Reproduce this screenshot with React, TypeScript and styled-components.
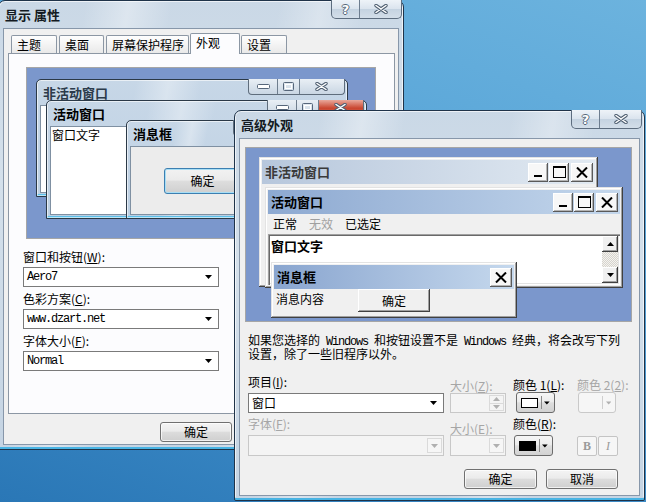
import React from 'react';
import styled, { createGlobalStyle } from 'styled-components';

type Box = { $x: number; $y: number; $w: number; $h: number };
const placed = (p: Box) => `left: ${p.$x}px; top: ${p.$y}px; width: ${p.$w}px; height: ${p.$h}px;`;

const GlobalStyle = createGlobalStyle`
  html, body { margin: 0; padding: 0; }
  body {
    font-family: "Noto Sans CJK SC", "Noto Sans", sans-serif;
    font-size: 12px;
    line-height: 14px;
    color: #000;
  }
  * { box-sizing: border-box; }
`;

const Desktop = styled.div`
  position: relative;
  width: 646px;
  height: 502px;
  overflow: hidden;
  background: linear-gradient(200deg, #6cb3de 0%, #58a5d8 35%, #3b89c5 72%, #2a77b6 100%);
`;

/* ---------- Aero window frame ---------- */

const Frame = styled.div<Box>`
  position: absolute;
  isolation: isolate;
  ${placed}
  display: flex;
  flex-direction: column;
  padding: 0 4px 4px;
  border: 1px solid #1f3349;
  border-radius: 7px 7px 2px 2px;
  background:
    linear-gradient(100deg, rgba(255, 255, 255, 0) 18%, rgba(255, 255, 255, 0.35) 27%, rgba(255, 255, 255, 0) 36%,
      rgba(255, 255, 255, 0) 58%, rgba(255, 255, 255, 0.3) 67%, rgba(255, 255, 255, 0) 76%),
    linear-gradient(180deg, #cad8e6 0%, #d4e0eb 40%, #c5d4e3 100%);
  box-shadow: inset 0 -2px 0 #48b4e4, inset 0 0 0 1px rgba(255, 255, 255, 0.65);
`;

const TitleBar = styled.div`
  flex: none;
  height: 27px;
  display: flex;
  align-items: center;
  padding-left: 2px;
  font-size: 13px;
  font-weight: bold;
  color: #131a22;
`;

const CaptionGroup = styled.div<{ $right: number }>`
  position: absolute;
  top: -1px;
  right: ${(p) => p.$right}px;
  display: flex;
  height: 19px;
  border: 1px solid #5d6d7f;
  border-top: none;
  border-radius: 0 0 5px 5px;
  overflow: hidden;
  background: linear-gradient(#eef3f8 0%, #dbe4ee 48%, #c5d3e1 52%, #d3dee9 100%);
`;

const CaptionButton = styled.div<{ $w: number }>`
  width: ${(p) => p.$w}px;
  display: flex;
  align-items: center;
  justify-content: center;
  & + & {
    border-left: 1px solid #6d7d8f;
  }
`;

const HelpGlyph = styled.span`
  font-family: "DejaVu Sans", sans-serif;
  font-size: 13px;
  font-weight: bold;
  line-height: 13px;
  color: #fff;
  text-shadow: 1px 0 #58687a, -1px 0 #58687a, 0 1px #58687a, 0 -1px #58687a;
`;

const OutlineX = ({ w = 14, h = 10 }: { w?: number; h?: number }) => (
  <svg width={w} height={h} viewBox={`0 0 ${w} ${h}`}>
    <path d={`M2 1.5L${w - 2} ${h - 1.5}M${w - 2} 1.5L2 ${h - 1.5}`} stroke="#4f5f71" strokeWidth="3.4" strokeLinecap="round" />
    <path d={`M2 1.5L${w - 2} ${h - 1.5}M${w - 2} 1.5L2 ${h - 1.5}`} stroke="#fff" strokeWidth="1.5" strokeLinecap="round" />
  </svg>
);

const Client = styled.div<{ $pad?: string }>`
  flex: 1;
  min-height: 0;
  position: relative;
  display: flex;
  flex-direction: column;
  padding: ${(p) => p.$pad ?? '0'};
  background: #f0f0f0;
  border: 1px solid #8797aa;
`;

/* ---------- shared controls ---------- */

const Mono = styled.span`
  font-family: "Liberation Mono", monospace;
  letter-spacing: -1.2px;
`;

const AeroButton = styled.div<{ $w?: number }>`
  flex: none;
  width: ${(p) => p.$w ?? 72}px;
  height: 20px;
  display: flex;
  align-items: center;
  justify-content: center;
  border: 1px solid #707070;
  border-radius: 3px;
  background: linear-gradient(#f4f4f4 0%, #ebebeb 45%, #dcdcdc 52%, #cfcfcf 100%);
  box-shadow: inset 0 0 0 1px rgba(255, 255, 255, 0.7);
`;

const Combo = styled.div<{ $w: number; $h?: number; $off?: boolean }>`
  flex: none;
  width: ${(p) => p.$w}px;
  height: ${(p) => p.$h ?? 20}px;
  display: flex;
  align-items: center;
  justify-content: space-between;
  padding: 0 ${(p) => (p.$off ? 1 : 6)}px 0 3px;
  border: 1px solid ${(p) => (p.$off ? '#c8c8c8' : '#7a7a7a')};
  background: ${(p) => (p.$off ? '#f4f4f4' : '#fff')};
`;

const ArrowBox = styled.div`
  width: 15px;
  height: 15px;
  display: flex;
  align-items: center;
  justify-content: center;
  border: 1px solid #dadada;
  background: #f6f6f6;
`;

const SpinBox = styled.div`
  width: 15px;
  height: 16px;
  display: flex;
  flex-direction: column;
  border: 1px solid #dadada;
  & > div {
    flex: 1;
    display: flex;
    align-items: center;
    justify-content: center;
  }
  & > div + div {
    border-top: 1px solid #dadada;
  }
`;

const DownArrow = ({ color = '#000' }: { color?: string }) => (
  <svg width="7" height="4" viewBox="0 0 7 4">
    <path d="M0 0h7L3.5 4z" fill={color} />
  </svg>
);

const UpArrow = ({ color = '#000' }: { color?: string }) => (
  <svg width="7" height="4" viewBox="0 0 7 4">
    <path d="M0 4h7L3.5 0z" fill={color} />
  </svg>
);

/* ---------- dialog 1: tabs, preview, fields ---------- */

const Tabs = styled.div`
  position: relative;
  z-index: 2;
  display: flex;
  align-items: flex-end;
  gap: 2px;
  height: 20px;
  margin: 4px 0 0 7px;
`;

const Tab = styled.div<{ $w: number; $active?: boolean }>`
  flex: none;
  width: ${(p) => p.$w}px;
  height: ${(p) => (p.$active ? 21 : 18)}px;
  margin: ${(p) => (p.$active ? '0 -1px -1px' : '0')};
  padding: 2px 0 0 5px;
  border: 1px solid #8c97a4;
  border-bottom: none;
  border-radius: 2px 2px 0 0;
  background: ${(p) => (p.$active ? '#fcfcfe' : 'linear-gradient(#fefefe, #e9e9e9)')};
  white-space: nowrap;
`;

const TabPanel = styled.div`
  position: relative;
  z-index: 1;
  flex: none;
  width: 387px;
  height: 361px;
  margin-left: 4px;
  display: flex;
  flex-direction: column;
  padding: 13px 0 0 17px;
  border: 1px solid #8c97a4;
  background: #fcfcfe;
`;

const PreviewBlue = styled.div<{ $w: number; $h: number }>`
  position: relative;
  flex: none;
  width: ${(p) => p.$w}px;
  height: ${(p) => p.$h}px;
  overflow: hidden;
  border: 1px solid #a6a6a6;
  background: #7b97cc;
`;

const FieldStack = styled.div`
  display: flex;
  flex-direction: column;
  margin: 6px 0 0 -3px;
`;

const FieldLabel = styled.div`
  margin-top: 5px;
  height: 14px;
  white-space: nowrap;
  & + div {
    margin-top: 3px;
  }
`;

const Footer = styled.div`
  display: flex;
  gap: 8px;
  margin: 8px 0 0 156px;
`;

/* mini Aero windows in the first preview */

const MiniWin = styled.div<Box>`
  position: absolute;
  ${placed}
  display: flex;
  flex-direction: column;
  padding: 0 3px 3px;
  border: 1px solid #2b3947;
  border-radius: 5px 5px 0 0;
  background:
    linear-gradient(100deg, rgba(255, 255, 255, 0) 30%, rgba(255, 255, 255, 0.35) 40%, rgba(255, 255, 255, 0) 50%),
    linear-gradient(180deg, #c7d7e7, #bccfe2);
  box-shadow: inset 0 0 0 1px rgba(255, 255, 255, 0.6), inset 0 -2px 0 #5cc0ea;
`;

const MiniTitle = styled.div<{ $dim?: boolean }>`
  flex: none;
  height: 25px;
  display: flex;
  align-items: center;
  padding-left: 3px;
  font-size: 13px;
  font-weight: bold;
  color: ${(p) => (p.$dim ? '#2c3b4b' : '#000')};
`;

const MiniBody = styled.div<{ $face?: boolean }>`
  flex: 1;
  padding: 1px 1px;
  border: 1px solid #7f90a2;
  background: ${(p) => (p.$face ? '#ececec' : '#fff')};
`;

const MiniCaps = styled.div<{ $w: number }>`
  position: absolute;
  top: -1px;
  right: 2px;
  width: ${(p) => p.$w}px;
  height: 16px;
  display: flex;
  border: 1px solid #5f6d7c;
  border-top: none;
  border-radius: 0 0 4px 4px;
  overflow: hidden;
  background: linear-gradient(#e9eff5, #c9d6e3);
`;

const MiniCap = styled.div<{ $w: number; $red?: boolean }>`
  width: ${(p) => p.$w}px;
  display: flex;
  align-items: center;
  justify-content: center;
  background: ${(p) => (p.$red ? 'linear-gradient(#e9a99c, #c9452f 55%, #d8725f)' : 'transparent')};
  & + & {
    border-left: 1px solid #6f7e8e;
  }
`;

const GlowButton = styled.div`
  width: 77px;
  height: 26px;
  margin: 20px 0 0 32px;
  display: flex;
  align-items: center;
  justify-content: center;
  border: 1px solid #3c7fb1;
  border-radius: 3px;
  background: linear-gradient(#f2f2f2 0%, #ebebeb 45%, #dddddd 52%, #cfcfcf 100%);
  box-shadow: inset 0 0 0 1px #a8def5;
`;

const MinGlyph = () => (
  <svg width="13" height="5" viewBox="0 0 13 5">
    <rect x="0.5" y="0.5" width="12" height="4" rx="1" fill="#fff" stroke="#56667a" />
  </svg>
);

const MaxGlyph = () => (
  <svg width="11" height="9" viewBox="0 0 11 9">
    <rect x="0.5" y="0.5" width="10" height="8" rx="1" fill="none" stroke="#56667a" />
    <rect x="2.5" y="2.5" width="6" height="4" fill="none" stroke="#fff" />
  </svg>
);

/* ---------- dialog 2: classic preview ---------- */

const ClassicWin = styled.div<Box>`
  position: absolute;
  ${placed}
  display: flex;
  flex-direction: column;
  padding: 3px;
  background: #f0f0f0;
  box-shadow: inset -1px -1px 0 #404040, inset 1px 1px 0 #e3e3e3, inset -2px -2px 0 #a0a0a0, inset 2px 2px 0 #fff;
`;

const ClassicTitle = styled.div<{ $from: string; $to: string; $dim?: boolean }>`
  flex: none;
  height: 24px;
  display: flex;
  align-items: center;
  padding: 0 2px 0 3px;
  background: linear-gradient(90deg, ${(p) => p.$from}, ${(p) => p.$to});
  font-size: 13px;
  font-weight: bold;
  color: ${(p) => (p.$dim ? '#3a3a3a' : '#000')};
  & > span {
    flex: 1;
  }
`;

const ClassicCaps = styled.div`
  display: flex;
  align-items: center;
`;

const ClassicCap = styled.div<{ $w?: number; $gap?: number }>`
  width: ${(p) => p.$w ?? 20}px;
  height: 19px;
  margin-left: ${(p) => p.$gap ?? 0}px;
  display: flex;
  align-items: center;
  justify-content: center;
  background: #f7f7f7;
  box-shadow: inset -1px -1px 0 #5a5a5a, inset 1px 1px 0 #fff, inset -2px -2px 0 #b4b4b4;
`;

const ClassicMin = () => (
  <svg width="8" height="12" viewBox="0 0 8 12">
    <rect x="0" y="9" width="8" height="2" fill="#000" />
  </svg>
);

const ClassicMax = () => (
  <svg width="13" height="12" viewBox="0 0 13 12">
    <rect x="0.5" y="0.5" width="12" height="11" fill="none" stroke="#000" />
    <rect x="0" y="0" width="13" height="2" fill="#000" />
  </svg>
);

const ClassicClose = () => (
  <svg width="12" height="11" viewBox="0 0 12 11">
    <path d="M1 0.5L11 10.5M11 0.5L1 10.5" stroke="#000" strokeWidth="2" />
  </svg>
);

const MenuRow = styled.div`
  flex: none;
  height: 20px;
  display: flex;
  align-items: center;
`;

const MenuItem = styled.span<{ $off?: boolean }>`
  padding: 0 7px 0 5px;
  color: ${(p) => (p.$off ? '#a0a0a0' : '#000')};
`;

const TextWell = styled.div`
  flex: 1;
  display: flex;
  padding: 2px;
  background: #fff;
  box-shadow: inset 1px 1px 0 #a0a0a0, inset 2px 2px 0 #696969, inset -1px -1px 0 #fff, inset -2px -2px 0 #e3e3e3;
  & > b {
    flex: 1;
    padding: 3px 0 0 1px;
    font-size: 13px;
  }
`;

const ScrollBar = styled.div`
  width: 16px;
  display: flex;
  flex-direction: column;
  background: repeating-conic-gradient(#d6d3ce 0% 25%, #f4f3ee 0% 50%) 0 0 / 2px 2px;
`;

const ScrollButton = styled.div`
  height: 16px;
  display: flex;
  align-items: center;
  justify-content: center;
  background: #f0f0f0;
  box-shadow: inset -1px -1px 0 #404040, inset 1px 1px 0 #fff, inset -2px -2px 0 #a0a0a0;
`;

const ScrollTrack = styled.div`
  flex: 1;
`;

const MsgBody = styled.div`
  flex: 1;
  display: flex;
  align-items: flex-start;
  & > span {
    padding: 3px 0 0 2px;
  }
`;

const ClassicButton = styled.div`
  width: 72px;
  height: 23px;
  margin-left: 34px;
  display: flex;
  align-items: center;
  justify-content: center;
  background: #f0f0f0;
  box-shadow: inset -1px -1px 0 #404040, inset 1px 1px 0 #fff, inset -2px -2px 0 #a0a0a0;
`;

/* ---------- dialog 2: item settings ---------- */

const Note = styled.div`
  margin: 12px 0 0 3px;
  line-height: 12px;
  white-space: nowrap;
`;

const ItemGrid = styled.div`
  display: grid;
  grid-template-columns: 202px 63px 64px 40px;
  grid-template-rows: 17px 21px 22px 21px;
  margin: 15px 0 0 3px;
`;

const GridLabel = styled.div<{ $off?: boolean; $align?: string; $drop?: number }>`
  align-self: ${(p) => p.$align ?? 'start'};
  margin-bottom: ${(p) => p.$drop ?? 0}px;
  white-space: nowrap;
  color: ${(p) => (p.$off ? '#a6a6a6' : '#000')};
`;

const Cell = styled.div<{ $shift?: number }>`
  display: flex;
  align-items: flex-end;
  padding-left: ${(p) => p.$shift ?? 0}px;
`;

const ColorButton = styled.div<{ $off?: boolean; $w?: number }>`
  width: ${(p) => p.$w ?? 39}px;
  height: 21px;
  display: flex;
  align-items: center;
  gap: 3px;
  padding: 0 4px 0 4px;
  border: 1px solid ${(p) => (p.$off ? '#c9c9c9' : '#6b6b6b')};
  border-radius: 3px;
  background: ${(p) => (p.$off ? '#f6f6f6' : 'linear-gradient(#f6f6f6 0%, #ececec 45%, #dedede 52%, #d2d2d2 100%)')};
`;

const Swatch = styled.div<{ $color: string; $hidden?: boolean }>`
  width: 20px;
  height: 10px;
  border: 1px solid ${(p) => (p.$hidden ? 'transparent' : '#000')};
  background: ${(p) => (p.$hidden ? 'transparent' : p.$color)};
`;

const SplitLine = styled.div<{ $off?: boolean }>`
  width: 1px;
  height: 13px;
  background: ${(p) => (p.$off ? '#cfcfcf' : '#8a8a8a')};
`;

const StyleToggles = styled.div`
  display: flex;
  gap: 1px;
`;

const StyleToggle = styled.div<{ $italic?: boolean }>`
  width: 20px;
  height: 20px;
  display: flex;
  align-items: center;
  justify-content: center;
  border: 1px solid #c4c4c4;
  border-radius: 2px;
  background: #f6f6f6;
  font-family: "Liberation Serif", serif;
  font-size: 12px;
  font-weight: ${(p) => (p.$italic ? 'normal' : 'bold')};
  font-style: ${(p) => (p.$italic ? 'italic' : 'normal')};
  color: #9a9a9a;
`;

const DialogButtons = styled.div`
  display: flex;
  justify-content: flex-end;
  gap: 9px;
  margin: 13px 21px 0 0;
`;

/* ---------- composition ---------- */

const tabs = [
  { label: '主题', w: 46 },
  { label: '桌面', w: 45 },
  { label: '屏幕保护程序', w: 83 },
  { label: '外观', w: 50, active: true },
  { label: '设置', w: 46 },
];

const AeroCaptions = ({ right }: { right: number }) => (
  <CaptionGroup $right={right}>
    <CaptionButton $w={27}>
      <HelpGlyph>?</HelpGlyph>
    </CaptionButton>
    <CaptionButton $w={42}>
      <OutlineX />
    </CaptionButton>
  </CaptionGroup>
);

const DisplayProperties = () => (
  <Frame $x={-2} $y={0} $w={406} $h={450}>
    <TitleBar>显示 属性</TitleBar>
    <AeroCaptions right={1} />
    <Client>
      <Tabs>
        {tabs.map((t) => (
          <Tab key={t.label} $w={t.w} $active={t.active}>
            {t.label}
          </Tab>
        ))}
      </Tabs>
      <TabPanel>
        <PreviewBlue $w={350} $h={172}>
          <MiniWin $x={9} $y={11} $w={312} $h={118}>
            <MiniTitle $dim>非活动窗口</MiniTitle>
            <MiniCaps $w={97}>
              <MiniCap $w={29}>
                <MinGlyph />
              </MiniCap>
              <MiniCap $w={22}>
                <MaxGlyph />
              </MiniCap>
              <MiniCap $w={46}>
                <OutlineX w={13} h={9} />
              </MiniCap>
            </MiniCaps>
            <MiniBody />
          </MiniWin>
          <MiniWin $x={19} $y={32} $w={321} $h={119}>
            <MiniTitle>活动窗口</MiniTitle>
            <MiniCaps $w={97}>
              <MiniCap $w={29}>
                <MinGlyph />
              </MiniCap>
              <MiniCap $w={22}>
                <MaxGlyph />
              </MiniCap>
              <MiniCap $w={46} $red>
                <OutlineX w={13} h={9} />
              </MiniCap>
            </MiniCaps>
            <MiniBody>窗口文字</MiniBody>
          </MiniWin>
          <MiniWin $x={99} $y={52} $w={150} $h={99}>
            <MiniTitle>消息框</MiniTitle>
            <MiniCaps $w={40}>
              <MiniCap $w={40} $red>
                <OutlineX w={13} h={9} />
              </MiniCap>
            </MiniCaps>
            <MiniBody $face>
              <GlowButton>确定</GlowButton>
            </MiniBody>
          </MiniWin>
        </PreviewBlue>
        <FieldStack>
          <FieldLabel>
            窗口和按钮(<u>W</u>):
          </FieldLabel>
          <Combo $w={196}>
            <Mono>Aero7</Mono>
            <DownArrow />
          </Combo>
          <FieldLabel>
            色彩方案(<u>C</u>):
          </FieldLabel>
          <Combo $w={196}>
            <Mono>www.dzart.net</Mono>
            <DownArrow />
          </Combo>
          <FieldLabel>
            字体大小(<u>F</u>):
          </FieldLabel>
          <Combo $w={196}>
            <Mono>Normal</Mono>
            <DownArrow />
          </Combo>
        </FieldStack>
      </TabPanel>
      <Footer>
        <AeroButton>确定</AeroButton>
        <AeroButton>取消</AeroButton>
        <AeroButton>应用(A)</AeroButton>
      </Footer>
    </Client>
  </Frame>
);

const activeFrom = '#8da9d1';
const activeTo = '#c4d7ec';

const AdvancedAppearance = () => (
  <Frame $x={234} $y={110} $w={411} $h={391}>
    <TitleBar>高级外观</TitleBar>
    <AeroCaptions right={2} />
    <Client $pad="8px 0 0 5px">
      <PreviewBlue $w={387} $h={175}>
        <ClassicWin $x={13} $y={9} $w={339} $h={130}>
          <ClassicTitle $from="#b7c7dc" $to="#e2eaf2" $dim>
            <span>非活动窗口</span>
            <ClassicCaps>
              <ClassicCap>
                <ClassicMin />
              </ClassicCap>
              <ClassicCap $gap={1}>
                <ClassicMax />
              </ClassicCap>
              <ClassicCap $w={22} $gap={2}>
                <ClassicClose />
              </ClassicCap>
            </ClassicCaps>
          </ClassicTitle>
        </ClassicWin>
        <ClassicWin $x={19} $y={39} $w={358} $h={101}>
          <ClassicTitle $from={activeFrom} $to={activeTo}>
            <span>活动窗口</span>
            <ClassicCaps>
              <ClassicCap>
                <ClassicMin />
              </ClassicCap>
              <ClassicCap $gap={1}>
                <ClassicMax />
              </ClassicCap>
              <ClassicCap $w={22} $gap={2}>
                <ClassicClose />
              </ClassicCap>
            </ClassicCaps>
          </ClassicTitle>
          <MenuRow>
            <MenuItem>正常</MenuItem>
            <MenuItem $off>无效</MenuItem>
            <MenuItem>已选定</MenuItem>
          </MenuRow>
          <TextWell>
            <b>窗口文字</b>
            <ScrollBar>
              <ScrollButton>
                <UpArrow />
              </ScrollButton>
              <ScrollTrack />
              <ScrollButton>
                <DownArrow />
              </ScrollButton>
            </ScrollBar>
          </TextWell>
        </ClassicWin>
        <ClassicWin $x={25} $y={114} $w={246} $h={56}>
          <ClassicTitle $from="#89a5cf" $to="#c5d8ed">
            <span>消息框</span>
            <ClassicCap $w={22}>
              <ClassicClose />
            </ClassicCap>
          </ClassicTitle>
          <MsgBody>
            <span>消息内容</span>
            <ClassicButton>确定</ClassicButton>
          </MsgBody>
        </ClassicWin>
      </PreviewBlue>
      <Note>
        如果您选择的<Mono> Windows </Mono>和按钮设置不是<Mono> Windows </Mono>经典，将会改写下列
        <br />
        设置，除了一些旧程序以外。
      </Note>
      <ItemGrid>
        <GridLabel>
          项目(<u>I</u>):
        </GridLabel>
        <GridLabel $off $align="end" $drop={-1}>
          大小(<u>Z</u>):
        </GridLabel>
        <GridLabel $align="end">
          颜色 1(<u>L</u>):
        </GridLabel>
        <GridLabel $off $align="end">
          颜色 2(<u>2</u>):
        </GridLabel>

        <Cell>
          <Combo $w={196}>
            <span>窗口</span>
            <DownArrow />
          </Combo>
        </Cell>
        <Cell>
          <Combo $w={56} $off>
            <span />
            <SpinBox>
              <div>
                <UpArrow color="#b0b0b0" />
              </div>
              <div>
                <DownArrow color="#b0b0b0" />
              </div>
            </SpinBox>
          </Combo>
        </Cell>
        <Cell $shift={3}>
          <ColorButton>
            <Swatch $color="#fff" />
            <SplitLine />
            <DownArrow />
          </ColorButton>
        </Cell>
        <Cell $shift={1}>
          <ColorButton $off $w={38}>
            <Swatch $color="transparent" $hidden />
            <SplitLine $off />
            <DownArrow color="#b0b0b0" />
          </ColorButton>
        </Cell>

        <GridLabel $off $align="center">
          字体(<u>F</u>):
        </GridLabel>
        <GridLabel $off $align="end" $drop={-1}>
          大小(<u>E</u>):
        </GridLabel>
        <GridLabel $align="center">
          颜色(<u>R</u>):
        </GridLabel>
        <span />

        <Cell>
          <Combo $w={196} $h={21} $off>
            <span />
            <ArrowBox>
              <DownArrow color="#b0b0b0" />
            </ArrowBox>
          </Combo>
        </Cell>
        <Cell>
          <Combo $w={56} $h={21} $off>
            <span />
            <ArrowBox>
              <DownArrow color="#b0b0b0" />
            </ArrowBox>
          </Combo>
        </Cell>
        <Cell $shift={1}>
          <ColorButton>
            <Swatch $color="#000" />
            <SplitLine />
            <DownArrow />
          </ColorButton>
        </Cell>
        <Cell>
          <StyleToggles>
            <StyleToggle>B</StyleToggle>
            <StyleToggle $italic>I</StyleToggle>
          </StyleToggles>
        </Cell>
      </ItemGrid>
      <DialogButtons>
        <AeroButton $w={73}>确定</AeroButton>
        <AeroButton>取消</AeroButton>
      </DialogButtons>
    </Client>
  </Frame>
);

export default function App() {
  return (
    <>
      <GlobalStyle />
      <Desktop>
        <DisplayProperties />
        <AdvancedAppearance />
      </Desktop>
    </>
  );
}
